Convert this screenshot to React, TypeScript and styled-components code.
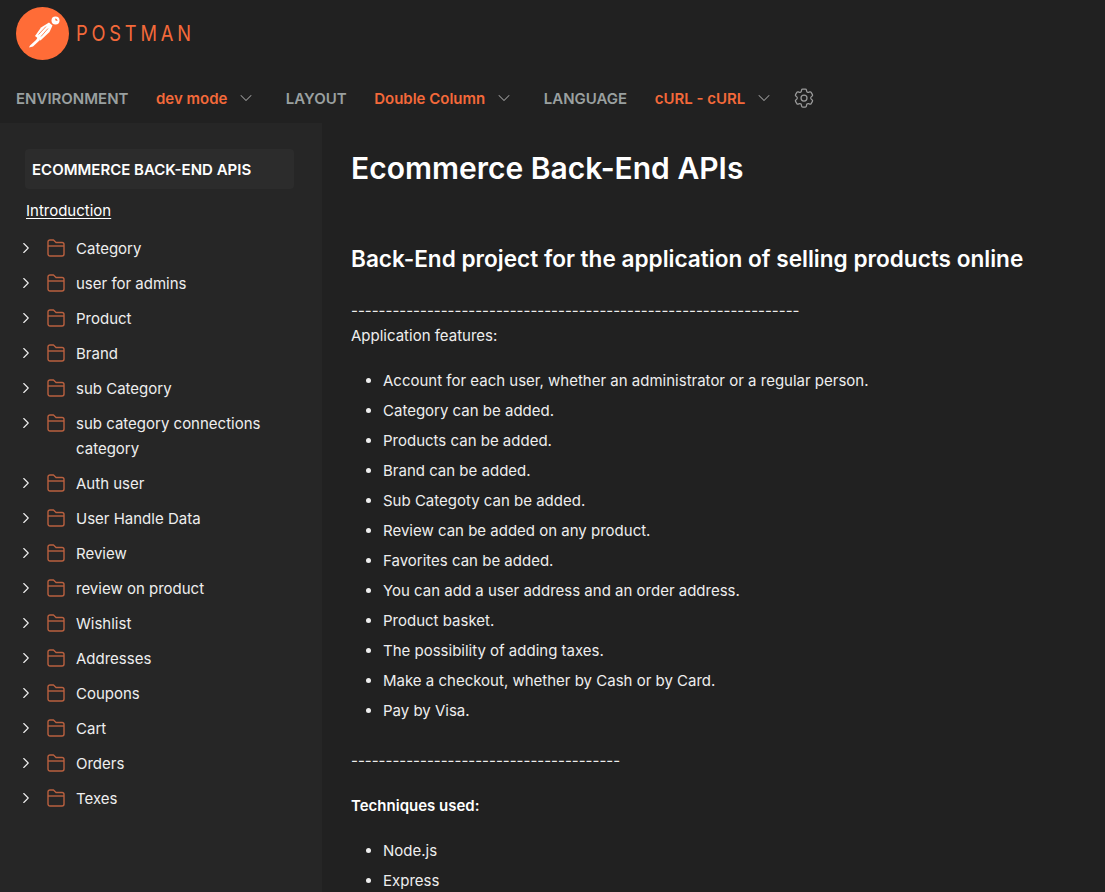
import React from 'react';
import styled, { createGlobalStyle } from 'styled-components';
import { ChevronDown, ChevronRight } from 'lucide-react';
import { HiOutlineCog6Tooth } from 'react-icons/hi2';

const GlobalStyle = createGlobalStyle`
  html, body {
    margin: 0;
    height: 100%;
    overflow: hidden;
    background: #212121;
  }
  * {
    box-sizing: border-box;
  }
`;

const Page = styled.div`
  height: 892px;
  overflow: hidden;
  background: #212121;
  color: #ffffff;
  font-family: Inter, "Liberation Sans", sans-serif;
`;

const Header = styled.header`
  height: 123px;
  padding: 7px 16px 0;
`;

const Brand = styled.div`
  display: flex;
  align-items: center;
  height: 52px;
  gap: 7px;
`;

const BrandName = styled.span`
  color: #f4693a;
  font-size: 22px;
  font-weight: 400;
  letter-spacing: 4.6px;
  transform: scaleX(0.83);
  transform-origin: left center;
`;

const Nav = styled.nav`
  display: flex;
  align-items: center;
  height: 28px;
  margin-top: 25px;
  font-size: 15px;
  font-weight: 600;
`;

const NavLabel = styled.span`
  color: #9aa0a0;
  margin-right: 27.5px;
`;

const NavValue = styled.span`
  color: #f4693a;
  margin-right: 9px;
`;

const NavChevron = styled(ChevronDown)`
  color: #9a9a9a;
  margin-right: 29.5px;
`;

const Gear = styled(HiOutlineCog6Tooth)`
  color: #9a9a9a;
  margin-left: -12px;
`;

const Body = styled.div`
  display: flex;
  height: 769px;
`;

const Sidebar = styled.aside`
  width: 322px;
  flex-shrink: 0;
  background: #262626;
  padding: 26px 28px 0 25px;
`;

const SidebarTitle = styled.div`
  display: flex;
  align-items: center;
  height: 40px;
  padding-left: 7px;
  background: #2c2c2c;
  border-radius: 4px;
  font-size: 15px;
  font-weight: 600;
`;

const IntroLink = styled.a`
  display: block;
  margin: 12px 0 10px 1px;
  color: #ffffff;
  font-size: 15px;
  line-height: 20px;
  text-decoration: underline;
  text-underline-offset: 2px;
`;

const Tree = styled.ul`
  list-style: none;
  margin: 0 0 0 -5px;
  padding: 0;
`;

const TreeRow = styled.li`
  display: flex;
  padding: 5px 0;
  font-size: 15px;
  line-height: 25px;
  color: #eeeeee;
`;

const Arrow = styled(ChevronRight)`
  flex-shrink: 0;
  margin: 3px 12px 0 -3px;
  color: #eeeeee;
`;

const FolderSvg = styled.svg`
  flex-shrink: 0;
  width: 18px;
  height: 18px;
  margin: 3px 11px 0 0;
  fill: none;
  stroke: #b9603f;
  stroke-width: 1.4;
  stroke-linejoin: round;
`;

const Main = styled.main`
  flex: 1;
  padding: 25px 40px 0 29px;
  font-size: 15px;
  line-height: 25px;
`;

const Title = styled.h1`
  margin: 0 0 51px;
  font-size: 30px;
  line-height: 40px;
  font-weight: 600;
`;

const Subtitle = styled.h2`
  margin: 0 0 19px;
  font-size: 22.6px;
  line-height: 40px;
  font-weight: 600;
`;

const Paragraph = styled.p`
  margin: 0;
  color: #eeeeee;
`;

const Features = styled.ul`
  margin: 20px 0 25px;
  padding: 0 0 0 32px;
`;

const Feature = styled.li`
  margin-bottom: 5px;
  color: #eeeeee;
`;

const Strong = styled.p`
  margin: 20px 0;
  font-weight: 600;
`;

const folders = [
  'Category',
  'user for admins',
  'Product',
  'Brand',
  'sub Category',
  'sub category connections category',
  'Auth user',
  'User Handle Data',
  'Review',
  'review on product',
  'Wishlist',
  'Addresses',
  'Coupons',
  'Cart',
  'Orders',
  'Texes',
];

const features = [
  'Account for each user, whether an administrator or a regular person.',
  'Category can be added.',
  'Products can be added.',
  'Brand can be added.',
  'Sub Categoty can be added.',
  'Review can be added on any product.',
  'Favorites can be added.',
  'You can add a user address and an order address.',
  'Product basket.',
  'The possibility of adding taxes.',
  'Make a checkout, whether by Cash or by Card.',
  'Pay by Visa.',
];

const Logo = () => (
  <svg width="53" height="53" viewBox="0 0 53 53">
    <circle cx="26.5" cy="26.5" r="26.5" fill="#ff6c37" />
    {/* the running figure: legs, torso with stripes, head */}
    <path d="M13 40.5 L14 38.5 L20 33 L22 30 L24 33 L17 39.5 Z" fill="#fff" />
    <path d="M19 29 L25 20.5 L33 15.5 L36.5 18.5 L33.5 25 L24.5 33.5 Z" fill="#fff" />
    <path d="M22.5 27.5 L30 19.5 M25 29.5 L32 21.5" stroke="#ff6c37" strokeWidth="0.8" fill="none" />
    <circle cx="39.5" cy="13.5" r="4" fill="#fff" />
    <path d="M39 11.5 A2.5 2.5 0 0 1 41.5 14 L39.5 13.5 Z" fill="#ff6c37" />
  </svg>
);

const FolderIcon = () => (
  <FolderSvg viewBox="0 0 18 18">
    <path d="M3 1 H6.5 L9 3.5 H15 a2 2 0 0 1 2 2 V15 a2 2 0 0 1 -2 2 H3 a2 2 0 0 1 -2 -2 V3 a2 2 0 0 1 2 -2 Z" />
    <path d="M1 7 H17" />
  </FolderSvg>
);

const App: React.FC = () => {
  return (
    <Page>
      <GlobalStyle />
      <Header>
        <Brand>
          <Logo />
          <BrandName>POSTMAN</BrandName>
        </Brand>
        <Nav>
          <NavLabel>ENVIRONMENT</NavLabel>
          <NavValue>dev mode</NavValue>
          <NavChevron size={20} strokeWidth={1.25} />
          <NavLabel>LAYOUT</NavLabel>
          <NavValue>Double Column</NavValue>
          <NavChevron size={20} strokeWidth={1.25} />
          <NavLabel>LANGUAGE</NavLabel>
          <NavValue>cURL - cURL</NavValue>
          <NavChevron size={20} strokeWidth={1.25} />
          <Gear size={24} strokeWidth={1.25} />
        </Nav>
      </Header>
      <Body>
        <Sidebar>
          <SidebarTitle>ECOMMERCE BACK-END APIS</SidebarTitle>
          <IntroLink>Introduction</IntroLink>
          <Tree>
            {folders.map((name) => (
              <TreeRow key={name}>
                <Arrow size={18} strokeWidth={1.5} />
                <FolderIcon />
                <span>{name}</span>
              </TreeRow>
            ))}
          </Tree>
        </Sidebar>
        <Main>
          <Title>Ecommerce Back-End APIs</Title>
          <Subtitle>Back-End project for the application of selling products online</Subtitle>
          <Paragraph>-----------------------------------------------------------------</Paragraph>
          <Paragraph>Application features:</Paragraph>
          <Features>
            {features.map((text) => (
              <Feature key={text}>{text}</Feature>
            ))}
          </Features>
          <Paragraph>---------------------------------------</Paragraph>
          <Strong>Techniques used:</Strong>
          <Features>
            <Feature>Node.js</Feature>
            <Feature>Express</Feature>
          </Features>
        </Main>
      </Body>
    </Page>
  );
};

export default App;
